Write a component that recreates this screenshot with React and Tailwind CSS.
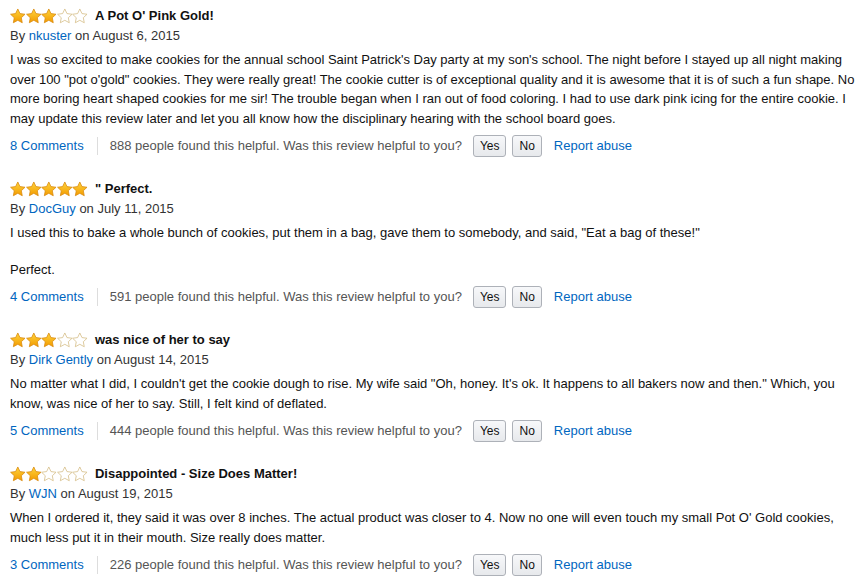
import React from "react";

const reviews = [
  {
    stars: 3,
    title: "A Pot O' Pink Gold!",
    author: "nkuster",
    date: "August 6, 2015",
    body: [
      "I was so excited to make cookies for the annual school Saint Patrick's Day party at my son's school. The night before I stayed up all night making over 100 \"pot o'gold\" cookies. They were really great! The cookie cutter is of exceptional quality and it is awesome that it is of such a fun shape. No more boring heart shaped cookies for me sir! The trouble began when I ran out of food coloring. I had to use dark pink icing for the entire cookie. I may update this review later and let you all know how the disciplinary hearing with the school board goes.",
    ],
    comments: 8,
    helpful: 888,
  },
  {
    stars: 5,
    title: "\" Perfect.",
    author: "DocGuy",
    date: "July 11, 2015",
    body: [
      "I used this to bake a whole bunch of cookies, put them in a bag, gave them to somebody, and said, \"Eat a bag of these!\"",
      "Perfect.",
    ],
    comments: 4,
    helpful: 591,
  },
  {
    stars: 3,
    title: "was nice of her to say",
    author: "Dirk Gently",
    date: "August 14, 2015",
    body: [
      "No matter what I did, I couldn't get the cookie dough to rise. My wife said \"Oh, honey. It's ok. It happens to all bakers now and then.\" Which, you know, was nice of her to say. Still, I felt kind of deflated.",
    ],
    comments: 5,
    helpful: 444,
  },
  {
    stars: 2,
    title: "Disappointed - Size Does Matter!",
    author: "WJN",
    date: "August 19, 2015",
    body: [
      "When I ordered it, they said it was over 8 inches. The actual product was closer to 4. Now no one will even touch my small Pot O' Gold cookies, much less put it in their mouth. Size really does matter.",
    ],
    comments: 3,
    helpful: 226,
  },
];

// fat five-point star in a 16x16 box
const STAR = "8,0.8 10.23,5.53 15.42,6.19 11.61,9.77 12.58,14.91 8,12.4 3.42,14.91 4.39,9.77 0.58,6.19 5.77,5.53";

function Star({ filled, id }) {
  return (
    <svg width="15.6" height="16" viewBox="0 0 16 16" className="block">
      <defs>
        <linearGradient id={id} x1="0" y1="0" x2="0" y2="1">
          <stop offset="0" stopColor="#ffd53d" />
          <stop offset="1" stopColor="#f29a00" />
        </linearGradient>
      </defs>
      {filled ? (
        <polygon points={STAR} fill={`url(#${id})`} stroke="#d98a10" strokeWidth="0.8" strokeLinejoin="round" />
      ) : (
        <polygon points={STAR} fill="#ffffff" stroke="#d4bc85" strokeWidth="0.8" strokeLinejoin="round" />
      )}
    </svg>
  );
}

function Stars({ count, idx }) {
  return (
    <div className="flex items-center">
      {[0, 1, 2, 3, 4].map((i) => (
        <Star key={i} filled={i < count} id={`g${idx}-${i}`} />
      ))}
    </div>
  );
}

function Review({ r, idx }) {
  return (
    <div className="pb-[22px]">
      <div className="flex items-center h-5">
        <Stars count={r.stars} idx={idx} />
        <span className="ml-[7px] font-bold text-[13px] text-[#111]">{r.title}</span>
      </div>
      <div className="h-5 leading-5 text-[13px] text-[#333]">
        By <span className="text-[#0066c0]">{r.author}</span> on {r.date}
      </div>
      <div className="mt-1 text-[13px] leading-[19.5px] text-[#111] flex flex-col gap-[17px]">
        {r.body.map((p, i) => (
          <p key={i}>{p}</p>
        ))}
      </div>
      <div className="mt-[7px] h-[22px] flex items-center text-[13px]">
        <span className="text-[#0066c0]">{r.comments} Comments</span>
        <span className="ml-[13px] mr-[12px] h-[18px] border-l border-[#ddd]"></span>
        <span className="text-[#555]">
          {r.helpful} people found this helpful. Was this review helpful to you?
        </span>
        <button className="ml-[11px] h-[22px] px-[6px] rounded-[3px] border border-[#adb1b8] bg-gradient-to-b from-[#f7f8fa] to-[#e7e9ec] text-[12px] text-[#111]">
          Yes
        </button>
        <button className="ml-[6px] h-[22px] px-[6px] rounded-[3px] border border-[#adb1b8] bg-gradient-to-b from-[#f7f8fa] to-[#e7e9ec] text-[12px] text-[#111]">
          No
        </button>
        <span className="ml-[12px] text-[#0066c0]">Report abuse</span>
      </div>
    </div>
  );
}

export default function App() {
  return (
    <div
      className="w-[868px] h-[579px] overflow-hidden bg-white pl-[10px] pt-[6px]"
      style={{ fontFamily: "'Liberation Sans', Arial, sans-serif" }}
    >
      {reviews.map((r, i) => (
        <Review key={i} r={r} idx={i} />
      ))}
    </div>
  );
}
